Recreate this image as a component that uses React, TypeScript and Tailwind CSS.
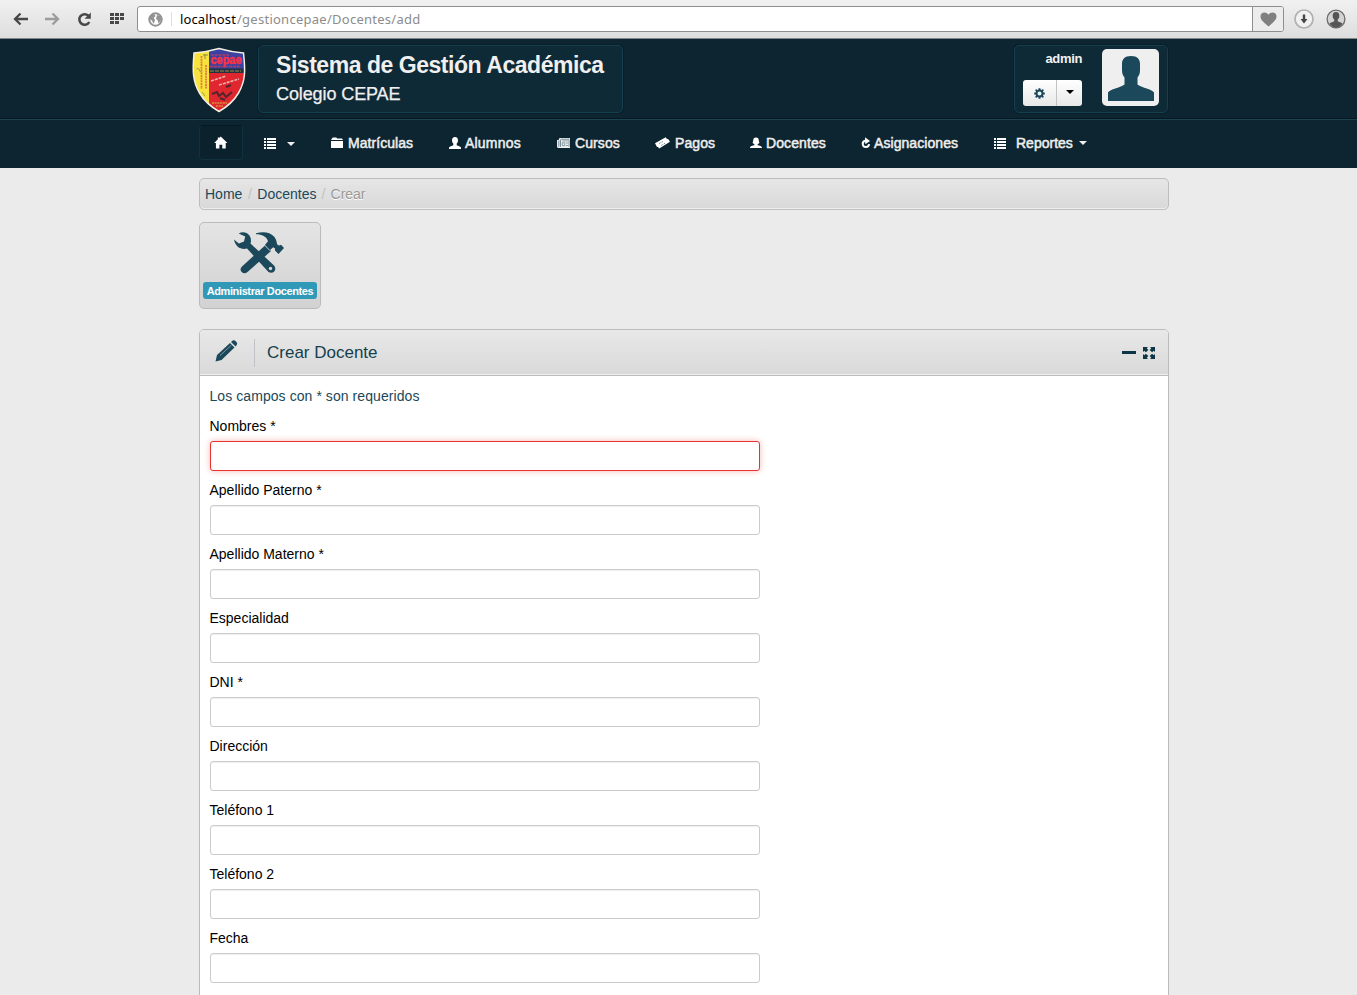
import React from 'react';

type P = { className?: string };

const HomeIcon = () => (
  <svg width="14" height="14" viewBox="0 0 14 14" fill="#fff"><path d="M7 .5 14 7.3h-1.8V13H8.6V9H5.6v4H2V7.3H0.2L4 3.5V1.6h1.5v.5z" transform="scale(.96)" /></svg>
);
const ListIcon = () => (
  <svg width="12" height="12" viewBox="0 0 12 12" fill="#fff"><path d="M0 0h2v2H0zM3 0h9v2H3zM0 3h2v2H0zM3 3h9v2H3zM0 6h2v2H0zM3 6h9v2H3zM0 9h2v2H0zM3 9h9v2H3z" /></svg>
);
const FolderIcon = () => (
  <svg width="12" height="12" viewBox="0 0 12 12" fill="#fff"><path d="M1 1.500 1.800.5h3.500l.8 1H11L12 3H0zM0 4h12v7H0z" /></svg>
);
const UserIcon = () => (
  <svg width="12" height="12" viewBox="0 0 12 12" fill="#fff"><path d="M6 0c2.100 0 3 1.300 3 3.200C9 4.700 8.500 5.700 7.700 6.600v1.600c1.600.7 3.500 1.200 4.300 2.400V12H0v-1.400c.8-1.200 2.700-1.700 4.300-2.400V6.600C3.500 5.700 3 4.700 3 3.200 3 1.300 3.900 0 6 0z" /></svg>
);
const TeacherIcon = () => (
  <svg width="12" height="12" viewBox="0 0 12 12" fill="#fff"><path d="M6 .5c1.900 0 2.700 1.200 2.700 2.600L9.400 6 7.600 7.200v1.100C9.200 8.500 12 9 12 11H0c0-2 2.800-2.500 4.400-2.700V7.200L2.600 6l.7-2.900C3.300 1.700 4.100.5 6 .5z" /></svg>
);
const NewsIcon = () => (
  <svg width="14" height="11" viewBox="0 0 14 11"><path fill="#eee" d="M2.500 0H13v10H1.500C.6 10 0 9.400 0 8.500V2h1.500z" /><path d="M1.800 2.500v6M3.500 1.500v7.300M4 1.200h8M12 1.500v7.300" stroke="#5c727d" strokeWidth=".8" /><path d="M5.300 2.900h5.500M5.300 4.700h2.500v3H5.300zM9 5h2M9 7.500h2" stroke="#71858f" strokeWidth=".8" fill="none" /></svg>
);
const TicketIcon = () => (
  <svg width="15" height="12" viewBox="0 0 15 12"><path d="m0 6.200 10.700-5.900L12 2l1.100.1L15 4.700 4.200 11.400 3 10l-1-.1z" fill="#fff" /><path d="m4.200 6.500 4.300-2.300M6.300 8.400l4.400-2.500" stroke="#48616e" strokeWidth=".8" strokeDasharray="1.500 1.200" /></svg>
);
const RepeatIcon = () => (
  <svg width="10" height="12" viewBox="0 0 10 12" fill="none"><path d="M5 3.800H4A3.200 3.200 0 1 0 8.100 7.200" stroke="#fff" strokeWidth="2" /><path d="M4 .3 9 4 4.300 7.300z" fill="#fff" /></svg>
);
const Caret = ({ className = '' }: P) => (
  <svg className={className} width="8" height="4" viewBox="0 0 8 4"><path d="M0 0h8L4 4z" fill="currentColor" /></svg>
);

function Crest() {
  return (
    <svg width="54" height="66" viewBox="0 0 54 66">
      <defs>
        <clipPath id="shield"><path d="M2 6Q15 5 27 1.500 39 5 51.500 6c2 18 2 28-5 40Q40 57 27 64.500 14 57 7.500 46C.5 34 .5 24 2 6z" /></clipPath>
      </defs>
      <g clipPath="url(#shield)">
        <path d="M0 0h17v66H0z" fill="#f6e43c" />
        <path d="M17 0h37v23H17z" fill="#3b41a0" />
        <path d="M17 26h37v40H17z" fill="#e0262f" />
        <path d="M17 21.500h37V26H17z" fill="#263244" />
        <path d="M18 24h31" stroke="#9b8d45" strokeWidth="1" strokeDasharray="4 1" />
        <path d="m20 47 5-2 2 4 4-3 3 4 6-5M28 51l5 2M34 40l5-2" stroke="#54252b" strokeWidth="2" fill="none" />
        <text x="18.500" y="17" fontFamily="Liberation Sans" fontWeight="700" fontSize="12" textLength="31" lengthAdjust="spacingAndGlyphs" fill="#fa3344" stroke="#fa3344" strokeWidth=".5">cepae</text>
        <path d="M19 8h18M18 19.500h30" stroke="#ad3c65" strokeWidth="1.500" strokeDasharray="3 .8" />
        <path d="M4.500 22q2-2 4 3M13 7v5M11 8h5" stroke="#8a8b55" strokeWidth="1" fill="none" />
        <path d="M9.500 9v33M14 18v24" stroke="#df7742" strokeWidth="1.700" strokeDasharray="2 .7" />
        <path d="m10 45 3 4" stroke="#a59a4c" fill="none" />
        <path d="m19 34 15-5M27 38l20-6" stroke="#f3b4b2" strokeWidth="1.500" strokeDasharray="3 1" />
        <path d="M20 56h15M24 59h7" stroke="#d19436" strokeWidth="1.500" strokeDasharray="2 .7" />
      </g>
      <path d="M2 6Q15 5 27 1.500 39 5 51.500 6c2 18 2 28-5 40Q40 57 27 64.500 14 57 7.500 46C.5 34 .5 24 2 6z" fill="none" stroke="#f3efe2" strokeWidth="1.500" />
    </svg>
  );
}

function BrowserBar() {
  return (
    <div className="flex h-[39px] items-center border-b border-[#85888a] bg-gradient-to-b from-[#f1f1f1] to-[#dedede]">
      <svg className="ml-[13px]" width="16" height="14" viewBox="0 0 16 14" fill="none" stroke="#484848" strokeWidth="2.300"><path d="M2 7h13M7.500 1.500 2 7l5.500 5.500" /></svg>
      <svg className="ml-[15px]" width="16" height="14" viewBox="0 0 16 14" fill="none" stroke="#9c9c9c" strokeWidth="2.300"><path d="M1 7h13M8.500 1.500 14 7l-5.500 5.500" /></svg>
      <svg className="ml-[17px]" width="15" height="15" viewBox="0 0 15 15" fill="none"><path d="M12.300 10A5.300 5.300 0 1 1 11.300 3.600" stroke="#484848" strokeWidth="2.500" /><path d="M13.800.5v6.300H7.500z" fill="#484848" /></svg>
      <svg className="ml-[18px]" width="15" height="12" viewBox="0 0 15 12" fill="#484848"><path d="M0 0h4v3H0zM5 0h4v3H5zM10 0h4v3h-4zM0 4h4v3H0zM5 4h4v3H5zM10 4h4v3h-4zM0 8h4v3H0zM5 8h4v3H5z" /></svg>
      <div className="ml-[12px] flex h-[26px] w-[1147px] items-center rounded-[3px] border border-[#8e8e8e] bg-white">
        <svg className="ml-[10px]" width="15" height="15" viewBox="0 0 15 15"><circle cx="7.500" cy="7.500" r="6.200" fill="#fff" stroke="#929292" strokeWidth="2" /><path d="M2 3.500 6 2l1.500 2-1.800 2L7 8l-1.500 4L4 8.500 1.500 7zM9 3l3.500 1L13 8l-2.500 3.500L9.500 8 8 7z" fill="#929292" /></svg>
        <div className="ml-[8px] h-[14px] w-px bg-[#dedede]" />
        <div className="ml-[8px] flex whitespace-nowrap font-['Noto_Sans','Open_Sans',sans-serif] text-[13px] leading-[20px]">
          <span className="w-[57px] tracking-[0.12px] text-black">localhost</span>
          <span className="tracking-[0.26px] text-[#8c8c8c]">/gestioncepae/Docentes/add</span>
        </div>
        <div className="ml-auto flex h-full w-[31px] items-center justify-center rounded-r-[2px] border-l border-[#8e8e8e] bg-[#ececec]">
          <svg width="17" height="15" viewBox="0 0 17 15" fill="#808080"><path d="M8.500 14.500C4 10.500.5 8 .5 4.500.5 2 2.200.5 4.500.5c1.800 0 3.300 1 4 2.300.7-1.300 2.200-2.300 4-2.300 2.300 0 4 1.500 4 4 0 3.500-3.500 6-8 10z" /></svg>
        </div>
      </div>
      <svg className="ml-[10px]" width="20" height="20" viewBox="0 0 20 20"><circle cx="10" cy="10" r="9" fill="#f1f1f1" stroke="#b0b0b0" strokeWidth="1.700" /><path d="M8.800 5.500h2.400V10h2.300L10 14.500 6.500 10h2.300z" fill="#454545" /></svg>
      <svg className="ml-[12px]" width="20" height="20" viewBox="0 0 20 20"><circle cx="10" cy="10" r="8.900" fill="#d4d4d4" stroke="#6c6c6c" strokeWidth="1.300" /><path d="M10 3c2.700 0 3.500 2 3.300 4.200-.1 1.700-.8 2.600-1.600 3.500v1.500c1.300.7 3.500 1 4.700 2.300A8 8 0 0 1 10 18.500a8 8 0 0 1-6.400-4c1.200-1.300 3.400-1.600 4.700-2.300v-1.500c-.8-.9-1.500-1.800-1.600-3.500C6.500 5 7.300 3 10 3z" fill="#555" /></svg>
    </div>
  );
}

const panel = 'rounded-[5px] border border-[#153e4e] bg-[#0f2a37] shadow-[0_0_0_1px_#091f29]';

function Header() {
  return (
    <header className="h-[81px] border-b border-[#1c4352] bg-[#0d2531] shadow-[inset_0_-1px_0_#07171f]">
      <div className="ml-[192px] flex items-start pt-[6px]">
        <div className="mt-[2px] h-[66px] w-[54px]"><Crest /></div>
        <div className={`ml-[12px] h-[68px] w-[365px] pl-[17px] pt-[5px] whitespace-nowrap text-[#f0f0f0] ${panel}`}>
          <h1 className="text-[23px] font-bold leading-[29px] tracking-[-0.46px]">Sistema de Gestión Académica</h1>
          <h2 className="text-[18px] leading-[28px] tracking-[-0.1px] [-webkit-text-stroke:0.25px_#f0f0f0]">Colegio CEPAE</h2>
        </div>
        <div className={`ml-[391px] flex h-[68px] w-[154px] ${panel}`}>
          <div className="ml-[8px] w-[59px]">
            <div className="pt-[4px] text-right text-[13px] font-bold leading-[17px] tracking-[-0.35px] text-[#f2f2f2]">admin</div>
            <div className="mt-[13px] flex h-[26px] w-[59px] overflow-hidden rounded-[3px] bg-gradient-to-b from-white to-[#e8e8e8]">
              <div className="flex w-[34px] items-center justify-center border-r border-[#c2c2c2]">
                <svg width="11" height="11" viewBox="-5.500 -5.500 11 11"><circle r="3" fill="none" stroke="#1b485a" strokeWidth="2" /><path d="M-1-5.300h2V-3h-2zM-1 3h2v2.300h-2zM-5.300-1H-3v2h-2.300zM3-1h2.300v2H3z" fill="#1b485a" /><path d="m-3.900-3.900 1.700 1.700m4.400 4.400 1.700 1.700m0-7.800L2.200-2.200m-4.400 4.400-1.700 1.700" stroke="#1b485a" strokeWidth="1.600" /></svg>
              </div>
              <div className="flex flex-1 items-center justify-center pb-[2px] text-black"><Caret /></div>
            </div>
          </div>
          <div className="ml-[20px] mt-[3px] flex h-[57px] w-[57px] items-end justify-center rounded-[5px] bg-[#efefef] pb-[5px]">
            <svg width="46" height="45" viewBox="0 0 46 45" fill="#1b485a"><path d="M23 0c6.500 0 9 3.500 9 8v6c0 4-1 5.500-2.500 7.500v7c5 3.500 14 4.500 16.500 8V45H0v-8.500c2.500-3.500 11.500-4.500 16.500-8v-7C15 19.500 14 18 14 14V8c0-4.500 2.500-8 9-8z" /></svg>
          </div>
        </div>
      </div>
    </header>
  );
}

const items = [
  { label: 'Matrículas', icon: <FolderIcon />, box: 'w-[118px]', gap: 'w-[17px]', t: 'tracking-[0.05px]' },
  { label: 'Alumnos', icon: <UserIcon />, box: 'w-[108px]', gap: 'w-[16px]', t: 'tracking-[0.2px]' },
  { label: 'Cursos', icon: <NewsIcon />, box: 'w-[98px]', gap: 'w-[18px]', t: 'tracking-[0.1px]' },
  { label: 'Pagos', icon: <TicketIcon />, box: 'w-[95px]', gap: 'w-[20px]', t: 'tracking-[0.1px]' },
  { label: 'Docentes', icon: <TeacherIcon />, box: 'w-[111px]', gap: 'w-[16px]', t: 'tracking-[0.1px]' },
  { label: 'Asignaciones', icon: <RepeatIcon />, box: 'w-[133px]', gap: 'w-[13px]', t: 'tracking-[0.07px]' },
];

function Nav() {
  return (
    <nav className="flex h-[48px] items-center bg-[#0d2531] pl-[199px] text-[14px] text-[#eee] [-webkit-text-stroke:0.5px_#eee]">
      <div className="-mt-[3px] flex h-[35px] w-[44px] items-center justify-center rounded-[4px] border border-[#12313e] border-t-[#071a22] bg-[#0b212c]"><HomeIcon /></div>
      <div className="-mt-px ml-[21px] flex w-[67px] items-center"><ListIcon /><Caret className="ml-[11px]" /></div>
      {items.map((i) => (
        <div key={i.label} className={`flex shrink-0 items-center whitespace-nowrap pb-[2px] ${i.box}`}>
          <span className={`shrink-0 ${i.gap}`}>{i.icon}</span>
          <span className={i.t}>{i.label}</span>
        </div>
      ))}
      <div className="flex items-center pb-[2px]"><span className="pt-[2px]"><ListIcon /></span><span className="ml-[10px]">Reportes</span><Caret className="ml-[6px]" /></div>
    </nav>
  );
}

function Tools() {
  return (
    <svg width="50" height="42" viewBox="0 0 50 42" fill="#1b485a">
      <path d="M4.700 1.500C8-.3 12 0 14.500 2.500c2.500 2.600 3 5.700 2 9L40 33.500c3.500 4-.5 9-5.500 6.500L13 16.500C7.500 18 1.500 15.500 0 7.500l4.800 4L10 9.500l1.200-5z" />
      <path d="m31 13.500 6 5.500-23.500 21c-4 3.500-9.500-1.500-5.500-5.500z" />
      <path d="M22 1.300C29-.8 36 0 40 4.500c2 2.500 2.500 4 3 7.500.8 1.500 2.200 2 4 .8L50 16l-5.500 6-3.500-3.500V16.500l-1.800-1.300-3.700 3.300-4.800-5.300 3.300-4C32.500 4.500 28 2.300 22 2.300z" />
      <path d="m30.500 13 5.500 5.700" stroke="#dbdbdb" strokeWidth=".9" /><circle cx="36.500" cy="36.500" r="1.700" fill="#d9d9d9" />
    </svg>
  );
}

const fields = ['Nombres *', 'Apellido Paterno *', 'Apellido Materno *', 'Especialidad', 'DNI *', 'Dirección', 'Teléfono 1', 'Teléfono 2', 'Fecha'];

export default function App() {
  return (
    <div className="h-[995px] w-[1357px] overflow-hidden bg-[#ebebeb] font-['Liberation_Sans',Arial,sans-serif] text-[14px] text-black">
      <BrowserBar />
      <Header />
      <Nav />
      <main className="ml-[199px] w-[970px]">
        <div className="mt-[10px] flex h-[32px] items-center rounded-[5px] border border-[#bdbdbd] bg-gradient-to-b from-[#e6e6e6] to-[#d9d9d9] pl-[5px] text-[#1b485a] shadow-[inset_0_-1px_0_#eee]">
          <span>Home</span><span className="w-[15px] text-center text-[#c2c2c2]">/</span>
          <span>Docentes</span><span className="w-[14px] text-center text-[#c2c2c2]">/</span>
          <span className="text-[#999] [text-shadow:0_1px_0_white]">Crear</span>
        </div>
        <div className="mt-[12px] flex h-[87px] w-[122px] flex-col items-center rounded-[5px] border border-[#bbb] bg-gradient-to-b from-[#e4e4e4] to-[#d2d2d2] pt-[9px]">
          <div className="mr-[3px] h-[42px] w-[50px]"><Tools /></div>
          <div className="mt-[8px] h-[17px] w-[114px] whitespace-nowrap rounded-[3px] bg-[#3199b8] text-center text-[11px] font-bold leading-[18px] tracking-[-0.38px] text-white">Administrar Docentes</div>
        </div>
        <section className="mt-[20px] h-[700px] rounded-t-[5px] border border-[#bbb] bg-white">
          <div className="flex h-[46px] items-center rounded-t-[4px] border-b border-[#bbb] bg-gradient-to-b from-[#e8e8e8] to-[#d9d9d9] shadow-[inset_0_-1px_0_#eee]">
            <svg className="-mt-[4px] ml-[15px]" width="23" height="22" viewBox="0 0 23 22"><path d="M.5 21.500 2 15 15 3l4.500 4.500L6.500 20zM16 2l1.500-1.300c1-.7 2.200-.4 3.300.5 1.200 1.200 1.800 2.300 1 3.500l-1.200 1.700z" fill="#1b485a" /><path d="M5 15.500 16.500 5" stroke="#a9b8bf" strokeWidth=".7" /></svg>
            <div className="ml-[16px] h-[28px] w-px bg-[#bfc3c8]" />
            <h3 className="ml-[12px] text-[17px] text-[#153f4e]">Crear Docente</h3>
            <div className="ml-auto mr-[13px] flex items-center gap-[7px]">
              <div className="h-[3px] w-[14px] bg-[#0d3546]" />
              <svg width="12" height="12" viewBox="0 0 12 12" fill="#0d3546"><path d="M0 0h5L3.700 1.300l1.600 1.600-2.400 2.400-1.600-1.600L0 5zM12 0H7l1.300 1.300-1.600 1.600 2.400 2.400 1.600-1.600L12 5zM0 12h5l-1.300-1.300 1.600-1.600-2.400-2.400-1.600 1.600L0 7zM12 12H7l1.300-1.300-1.600-1.600 2.400-2.400 1.600 1.600L12 7z" /></svg>
            </div>
          </div>
          <form className="px-[10px] pt-[10px]">
            <p className="-ml-[0.5px] mb-[10px] h-[20px] leading-[20px] tracking-[0.07px] text-[#1b485a]">Los campos con * son requeridos</p>
            {fields.map((f, i) => (
              <div key={f} className="h-[64px]">
                <label className="-ml-[0.5px] mb-[5px] block h-[20px] leading-[20px]">{f}</label>
                <input className={i === 0 ? 'block h-[30px] w-[550px] rounded-[3px] border border-[#e9322d] bg-white shadow-[0_0_6px_#f8b9b7] outline-none' : 'block h-[30px] w-[550px] rounded-[3px] border border-[#ccc] bg-white shadow-[inset_0_1px_1px_#00000010] outline-none'} />
              </div>
            ))}
          </form>
        </section>
      </main>
    </div>
  );
}
